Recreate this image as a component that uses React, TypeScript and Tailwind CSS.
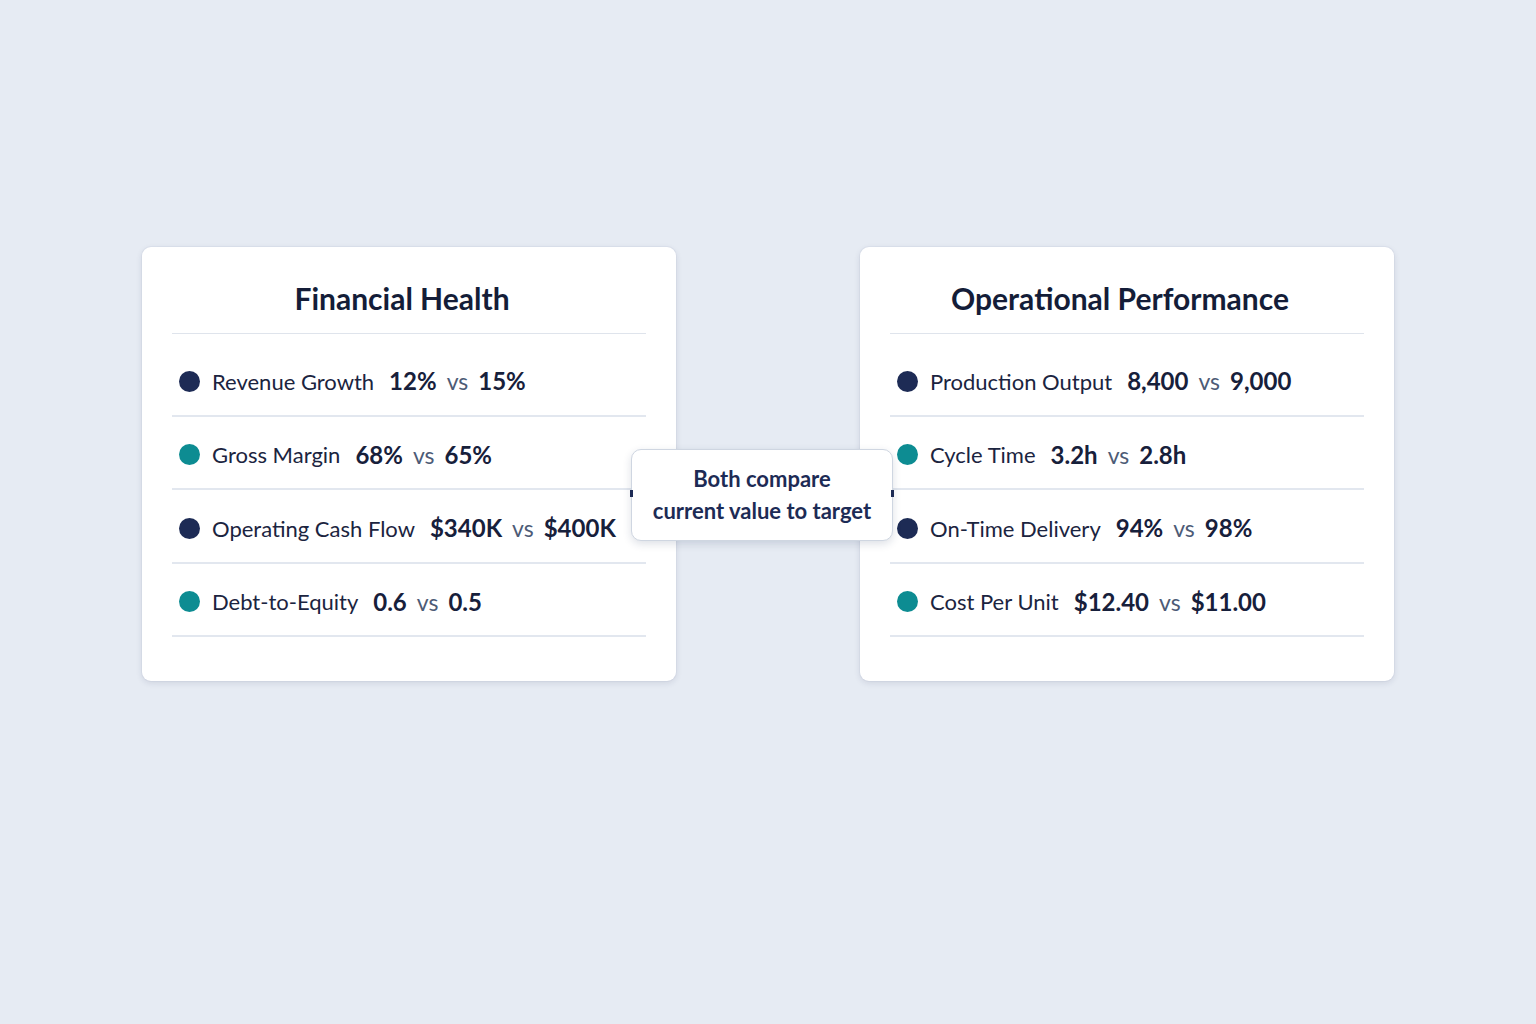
type Metric = { label: string; current: string; target: string; tone: "navy" | "teal" };

const financial: Metric[] = [
  { label: "Revenue Growth", current: "12%", target: "15%", tone: "navy" },
  { label: "Gross Margin", current: "68%", target: "65%", tone: "teal" },
  { label: "Operating Cash Flow", current: "$340K", target: "$400K", tone: "navy" },
  { label: "Debt-to-Equity", current: "0.6", target: "0.5", tone: "teal" },
];

const operational: Metric[] = [
  { label: "Production Output", current: "8,400", target: "9,000", tone: "navy" },
  { label: "Cycle Time", current: "3.2h", target: "2.8h", tone: "teal" },
  { label: "On-Time Delivery", current: "94%", target: "98%", tone: "navy" },
  { label: "Cost Per Unit", current: "$12.40", target: "$11.00", tone: "teal" },
];

function MetricCard({ title, items }: { title: string; items: Metric[] }) {
  return (
    <div className="w-[534px] rounded-[9px] bg-white px-[30px] pb-[44px] shadow-[0_2px_6px_rgba(30,45,85,0.12),0_0_0_1px_rgba(30,45,85,0.03)]">
      <h2 className="border-b border-[#dfe4ec] pt-[33px] pb-[16px] pr-[14px] text-center text-[30px] font-bold leading-[37px] text-[#141d38]">
        {title}
      </h2>
      <ul className="pt-[9px]">
        {items.map((m) => (
          <li
            key={m.label}
            className="flex h-[73.5px] items-center border-b-2 border-[#e2e7ef] pt-[5px] pl-[7px]"
          >
            <span
              className={
                m.tone === "navy"
                  ? "h-[21px] w-[21px] shrink-0 rounded-full bg-[#1d2b55]"
                  : "h-[21px] w-[21px] shrink-0 rounded-full bg-[#0d8c92]"
              }
            />
            <span className="ml-[12px] text-[22px] text-[#1b2440]">{m.label}</span>
            <span className="ml-[15px] text-[24px] font-bold text-[#17203b]">{m.current}</span>
            <span className="ml-[10px] text-[23px] text-[#4d5b76]">vs</span>
            <span className="ml-[10px] text-[24px] font-bold text-[#17203b]">{m.target}</span>
          </li>
        ))}
      </ul>
    </div>
  );
}

export default function App() {
  return (
    <div
      className="min-h-[1024px] w-full bg-[#e6ebf3] pt-[247px]"
      style={{ fontFamily: "Lato, 'Noto Sans', sans-serif" }}
    >
      <div className="relative mx-auto flex w-[1252px] justify-between">
        <MetricCard title="Financial Health" items={financial} />
        <MetricCard title="Operational Performance" items={operational} />

        {/* callout bridging the two cards */}
        <div className="absolute left-[489px] top-[202px] flex h-[92px] w-[262px] flex-col items-center justify-center rounded-[10px] border border-[#cfd6e1] bg-white shadow-[0_3px_8px_rgba(30,45,85,0.15)]">
          <span className="absolute left-[-2px] top-[40px] h-[7px] w-[3px] bg-[#1d2b55]" />
          <span className="absolute right-[-2px] top-[40px] h-[7px] w-[3px] bg-[#1d2b55]" />
          <p className="text-center text-[22px] font-bold leading-[32px] text-[#1d2b55]">
            Both compare
            <br />
            current value to target
          </p>
        </div>
      </div>
    </div>
  );
}
